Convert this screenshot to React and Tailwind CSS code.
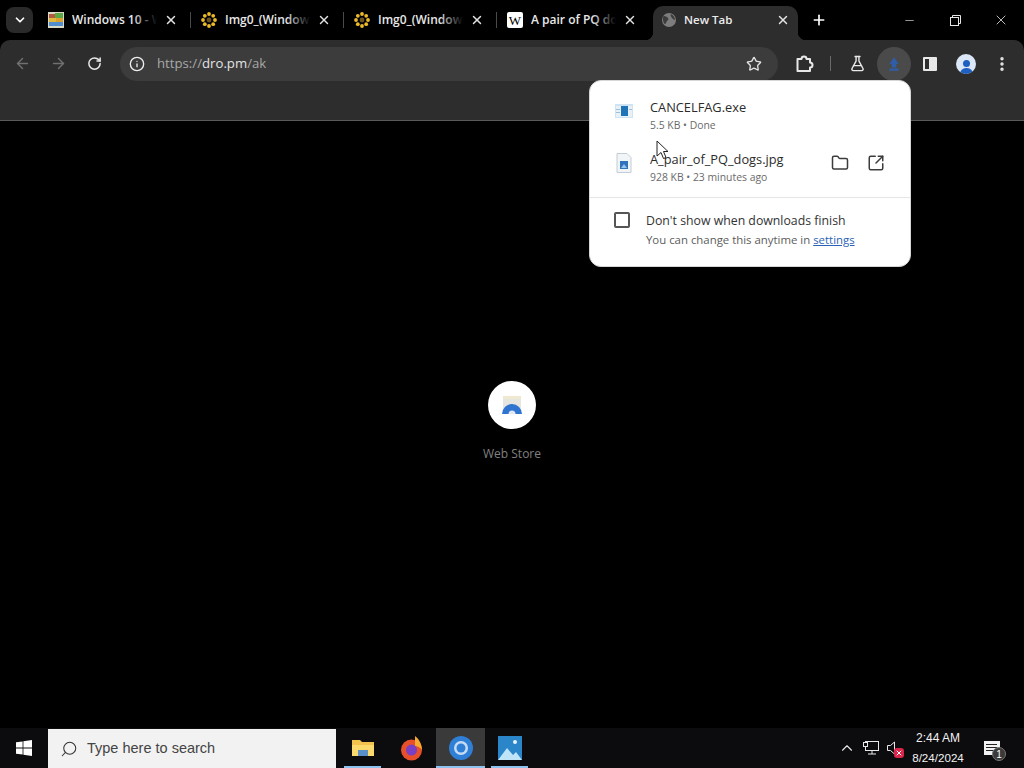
import React from 'react'
import { ChevronDown, X, Plus, Minus, ArrowLeft, ArrowRight, RotateCw, Info, Star, FlaskConical, EllipsisVertical, Folder, SquareArrowOutUpRight, ChevronUp, Search } from 'lucide-react'

const FONT = "font-['Open_Sans','Noto_Sans',sans-serif]"

const RainbowIcon = () => (
  <svg width="16" height="16" viewBox="0 0 16 16">
    <rect width="16" height="16" fill="#d9d9c8" />
    <rect x="1" y="2" width="6" height="4" fill="#b3583c" />
    <rect x="7" y="1" width="8" height="5" fill="#5aa845" />
    <rect x="1" y="6" width="7" height="4" fill="#e0b93c" />
    <rect x="8" y="6" width="7" height="4" fill="#d9a02f" />
    <rect x="1" y="10" width="14" height="4" fill="#4f8fd0" />
  </svg>
)

const FlowerIcon = () => (
  <svg width="16" height="16" viewBox="0 0 16 16">
    <circle cx="8" cy="8" r="2.4" fill="#6b5320" />
    {[[8, 2], [12.2, 3.8], [14, 8], [12.2, 12.2], [8, 14], [3.8, 12.2], [2, 8], [3.8, 3.8]].map(([x, y], i) => (
      <circle key={i} cx={x} cy={y} r="1.9" fill="#ecb92a" />
    ))}
  </svg>
)

const WikiIcon = () => (
  <div className="w-4 h-4 rounded-[2px] bg-white text-black flex items-center justify-center text-[13px] font-['Liberation_Serif',serif] leading-none">W</div>
)

const GlobeIcon = () => (
  <svg width="16" height="16" viewBox="0 0 16 16">
    <circle cx="8" cy="8" r="7" fill="#7d7d7d" />
    <path d="M3 4c2 0 3 1 4 2s0 2-1 3-1 3-2 3-2-3-2-5 0-3 1-3zM10 2c2 1 4 3 4 6-1 0-2-1-3-2s-2-3-1-4z" fill="#3c3c3c" />
  </svg>
)

const PuzzleIcon = () => (
  <svg className="ml-[17px]" width="19" height="19" viewBox="0 0 19 19" fill="none" stroke="#e8e8e8" strokeWidth="2" strokeLinejoin="round">
    <path d="M2.5 5h4a2.5 2.5 0 0 1 5 0h3.5v3.5a2.5 2.5 0 0 1 0 5V17H2.5z" />
  </svg>
)

const tabs = [
  { title: 'Windows 10 - W', icon: <RainbowIcon /> },
  { title: 'Img0_(Windows', icon: <FlowerIcon /> },
  { title: 'Img0_(Windows', icon: <FlowerIcon /> },
  { title: 'A pair of PQ dogs', icon: <WikiIcon /> },
]

const Tab = ({ title, icon, divider }) => (
  <div className="relative w-[153px] h-[34px] pb-[6px] pl-[10px] pr-[13px] flex items-center shrink-0">
    <div className="w-4 h-4 shrink-0">{icon}</div>
    <div className="relative ml-2 w-[85px] overflow-hidden whitespace-nowrap text-[12px] text-[#e8e8e8] font-semibold">
      {title}
      <div className="absolute inset-y-0 right-0 w-6 bg-gradient-to-r from-transparent to-black" />
    </div>
    <X className="ml-auto w-[14px] h-[14px] text-[#e3e3e3]" strokeWidth={2.5} />
    {divider && <div className="absolute right-0 top-[6px] w-px h-[16px] bg-[#4a4a4a]" />}
  </div>
)

const ActiveTab = () => (
  <div className="relative ml-[3px] w-[145px] h-[34px] pb-[6px] pl-[8px] pr-[8px] flex items-center rounded-t-[10px] bg-[#2d2d2d] shrink-0">
    <GlobeIcon />
    <span className="ml-[7px] text-[11.5px] font-semibold text-[#ececec]">New Tab</span>
    <X className="ml-auto w-[14px] h-[14px] text-[#e3e3e3]" strokeWidth={2.5} />
    <div className="absolute -left-[8px] bottom-0 w-[8px] h-[8px] bg-[radial-gradient(circle_at_0_0,transparent_8px,#2d2d2d_8.5px)]" />
    <div className="absolute -right-[8px] bottom-0 w-[8px] h-[8px] bg-[radial-gradient(circle_at_100%_0,transparent_8px,#2d2d2d_8.5px)]" />
  </div>
)

const FileRow = ({ name, meta, icon, actions }) => (
  <div className="flex items-center h-[52px] pl-[24px] pr-[25px]">
    <div className="w-[20px] flex justify-center mb-[8px]">{icon}</div>
    <div className="ml-[16px] flex-1">
      <div className="mb-[2px] text-[12.8px] leading-[18px] text-[#2b2b2b]">{name}</div>
      <div className="text-[10.4px] leading-[14px] text-[#6a6a6a]">{meta}</div>
    </div>
    {actions}
  </div>
)

const ExeIcon = () => (
  <svg width="18" height="14" viewBox="0 0 18 14">
    <rect width="18" height="14" fill="#cfe3f2" />
    <rect x="1" y="2" width="16" height="11" fill="#e8f1f8" />
    <rect x="6" y="2" width="7" height="10" fill="#1f74b8" />
    <rect x="1" y="5" width="4" height="1" fill="#9dbfd9" />
    <rect x="1" y="8" width="4" height="1" fill="#9dbfd9" />
    <rect x="14" y="5" width="3" height="1" fill="#9dbfd9" />
  </svg>
)

const JpgIcon = () => (
  <svg width="16" height="20" viewBox="0 0 16 20">
    <path d="M1 .5h10l4 4v15H1z" fill="#f2f5f8" stroke="#c4ccd4" />
    <rect x="4" y="8" width="8" height="8" fill="#2f73bd" />
    <path d="M5 15l3-4 3 4z" fill="#9cc3e8" />
  </svg>
)

const DownloadPopup = () => (
  <div className="absolute left-[589px] top-[80px] w-[322px] h-[187px] bg-white rounded-[12px] border border-[#d6d6d6] pt-[8px]">
    <FileRow name="CANCELFAG.exe" meta="5.5 KB • Done" icon={<ExeIcon />} />
    <FileRow
      name="A_pair_of_PQ_dogs.jpg"
      meta="928 KB • 23 minutes ago"
      icon={<JpgIcon />}
      actions={
        <div className="flex items-center gap-[18px] mb-[8px] text-[#3c3c3c]">
          <Folder className="w-[18px] h-[18px]" strokeWidth={2} />
          <SquareArrowOutUpRight className="w-[18px] h-[18px]" strokeWidth={2} />
        </div>
      }
    />
    <div className="mt-[4px] border-t border-[#e6e6e6] pt-[14px] pl-[24px] flex">
      <div className="w-[16px] h-[16px] border-2 border-[#555] rounded-[2px]" />
      <div className="ml-[16px]">
        <div className="text-[12.3px] leading-[18px] text-[#333]">Don't show when downloads finish</div>
        <div className="text-[11.4px] leading-[20px] text-[#5c5c5c]">
          You can change this anytime in <span className="text-[#2a62b5] underline">settings</span>
        </div>
      </div>
    </div>
  </div>
)

const MouseCursor = () => (
  <svg className="absolute left-[656px] top-[140px]" width="13" height="20" viewBox="0 0 13 20">
    <path d="M1 1v15l4-3.5 2.5 6 2.5-1-2.5-6H12z" fill="#fff" stroke="#222" strokeWidth="1" />
  </svg>
)

const WindowControls = () => (
  <div className="ml-auto flex items-center h-[28px] text-[#e8e8e8]">
    <div className="w-[46px] flex justify-center"><Minus className="w-[13px] h-[13px]" strokeWidth={1.2} /></div>
    <div className="w-[46px] flex justify-center">
      <svg width="11" height="11" viewBox="0 0 11 11" fill="none" stroke="currentColor">
        <rect x=".5" y="2.5" width="8" height="8" />
        <path d="M2.5 2.5v-2h8v8h-2" />
      </svg>
    </div>
    <div className="w-[46px] flex justify-center"><X className="w-[16px] h-[16px]" strokeWidth={1.2} /></div>
  </div>
)

const TabStrip = () => (
  <div className="h-[40px] bg-black flex items-start pt-[6px] relative">
    <div className="ml-[6px] mt-px w-[27px] h-[26px] rounded-[8px] bg-[#2a2a2a] flex items-center justify-center">
      <ChevronDown className="w-[14px] h-[14px] text-white" strokeWidth={3} />
    </div>
    <div className="ml-[5px] flex">
      {tabs.map((t, i) => (
        <Tab key={i} title={t.title} icon={t.icon} divider={i < 3} />
      ))}
      <ActiveTab />
      <div className="ml-[12px] mt-px w-[18px] h-[26px] flex items-center justify-center">
        <Plus className="w-[16px] h-[16px] text-white" strokeWidth={2.5} />
      </div>
    </div>
    <WindowControls />
  </div>
)

const Toolbar = () => (
  <div className="bg-[#2d2d2d] rounded-t-[10px] border-b border-[#5a5a5a] h-[81px]">
    <div className="h-[41px] flex items-center pt-[6px] pl-[14px]">
      <ArrowLeft className="w-[17px] h-[17px] text-[#707070]" strokeWidth={2} />
      <ArrowRight className="ml-[19px] w-[17px] h-[17px] text-[#707070]" strokeWidth={2} />
      <RotateCw className="ml-[20px] w-[15px] h-[15px] text-[#e8e8e8]" strokeWidth={2.4} />
      <div className="ml-[18px] w-[658px] h-[34px] rounded-[18px] bg-[#3c3c3c] flex items-center pl-[9px] pr-[16px]">
        <Info className="w-[16px] h-[16px] text-[#efefef]" strokeWidth={2} />
        <div className="ml-[12px] text-[13.2px] text-[#a8a8a8]">
          https://<span className="text-[#e4e4e4]">dro.pm</span>/ak
        </div>
        <Star className="ml-auto w-[16px] h-[16px] text-[#e3e3e3]" strokeWidth={2} />
      </div>
      <PuzzleIcon />
      <div className="ml-[16px] w-px h-[15px] bg-[#6a6a6a]" />
      <FlaskConical className="ml-[18px] w-[17px] h-[17px] text-[#e8e8e8]" strokeWidth={2} />
      <div className="ml-[11px] w-[34px] h-[34px] rounded-full bg-[#4a4a4a] flex items-center justify-center">
        <svg width="16" height="16" viewBox="0 0 14 14"><path d="M7 1l4 6H9v3H5V7H3zM3 11h8v2H3z" fill="#2f5ea8" /></svg>
      </div>
      <div className="ml-[12px] w-[14px] h-[14px] border-2 border-[#e8e8e8] flex justify-end rounded-[1px]">
        <div className="w-[6px] h-full bg-[#e8e8e8]" />
      </div>
      <div className="ml-[19px] w-[20px] h-[20px] rounded-full bg-[#dbe6f7] flex flex-col items-center justify-end overflow-hidden">
        <div className="w-[7px] h-[7px] rounded-full bg-[#1f5fbf]" />
        <div className="mt-[1px] w-[13px] h-[6px] rounded-t-full bg-[#1f5fbf]" />
      </div>
      <EllipsisVertical className="ml-[17px] w-[18px] h-[18px] text-[#e8e8e8]" strokeWidth={2.6} />
    </div>
  </div>
)

const WebStoreTile = () => (
  <div className="flex flex-col items-center pt-[260px]">
    <div className="w-[48px] h-[48px] rounded-full bg-white flex items-center justify-center">
      <svg width="24" height="24" viewBox="0 0 24 24">
        <rect x="3" y="3" width="18" height="18" fill="#e6e6e0" />
        <rect x="3" y="3" width="18" height="3" fill="#efe9d2" />
        <path d="M2 21a10 10 0 0 1 20 0z" fill="#2f74d0" />
        <path d="M8.5 21a3.5 3.5 0 0 1 7 0z" fill="#dfe9f7" />
      </svg>
    </div>
    <div className="mt-[16px] text-[12px] text-[#808080]">Web Store</div>
  </div>
)

const TaskbarApp = ({ children, active, running }) => (
  <div className={`relative w-[49px] h-full flex items-center justify-center ${active ? 'bg-[#3a3a3a]' : ''}`}>
    {children}
    {running && <div className={`absolute bottom-0 h-[2px] bg-[#8fc3ef] ${active ? 'left-0 right-0' : 'left-[6px] right-[6px]'}`} />}
  </div>
)

const Taskbar = () => (
  <div className="absolute bottom-0 left-0 right-0 h-[40px] bg-[#0c0c0e] flex items-stretch">
    <div className="w-[48px] flex items-center justify-center">
      <svg width="16" height="16" viewBox="0 0 16 16" fill="#fff">
        <path d="M0 2.3l6.6-.9v6.2H0zM7.4 1.3L16 0v7.6H7.4zM0 8.4h6.6v6.2L0 13.7zM7.4 8.4H16V16l-8.6-1.3z" />
      </svg>
    </div>
    <div className="w-[288px] mt-[1px] bg-[#f2f2f2] flex items-center pl-[12px]">
      <Search className="w-[18px] h-[18px] text-[#333] -scale-x-100" strokeWidth={1.4} />
      <span className="ml-[9px] text-[14.5px] text-[#444] font-['Liberation_Sans',sans-serif]">Type here to search</span>
    </div>
    <div className="ml-[2px] flex">
      <TaskbarApp running>
        <svg width="22" height="20" viewBox="0 0 22 20">
          <path d="M0 2h8l2 2h12v14H0z" fill="#f2c14e" />
          <rect y="7" width="22" height="11" fill="#fbd96c" />
          <rect x="6" y="12" width="10" height="6" fill="#5b8fc7" />
        </svg>
      </TaskbarApp>
      <TaskbarApp>
        <svg width="23" height="26" viewBox="0 0 23 26">
          <circle cx="11.5" cy="15" r="10.5" fill="#e8502a" />
          <path d="M15 1c4 3 7 8 7 14-2-3-5-4-7-4z" fill="#f8a92f" />
          <circle cx="11.5" cy="15" r="5.5" fill="#7a3fc2" />
        </svg>
      </TaskbarApp>
      <TaskbarApp active running>
        <svg width="24" height="24" viewBox="0 0 24 24">
          <circle cx="12" cy="12" r="12" fill="#2f7fd6" />
          <circle cx="12" cy="12" r="7" fill="#c5dcf4" />
          <circle cx="12" cy="12" r="4.5" fill="#2f7fd6" />
        </svg>
      </TaskbarApp>
      <TaskbarApp running>
        <svg width="24" height="24" viewBox="0 0 24 24">
          <rect width="24" height="24" fill="#2a85c9" />
          <path d="M0 24l9-12 6 7 3-3 6 8z" fill="#bfe3f7" />
          <circle cx="17" cy="6" r="2" fill="#e8f4fb" />
        </svg>
      </TaskbarApp>
    </div>
    <div className="ml-auto flex items-center text-white">
      <ChevronUp className="w-[18px] h-[18px] text-[#e8e8e8]" strokeWidth={1.5} />
      <svg className="ml-[7px]" width="16" height="14" viewBox="0 0 16 14" fill="none" stroke="#e8e8e8">
        <rect x="2.5" y=".5" width="13" height="9" />
        <rect x=".5" y="1.5" width="4" height="4" fill="#0c0c0e" />
        <path d="M9 10v3M5 13h8" />
      </svg>
      <div className="relative ml-[8px] w-[16px] h-[14px]">
        <svg width="10" height="14" viewBox="0 0 10 14" fill="none" stroke="#e8e8e8">
          <path d="M.5 4.5h3l4-3.5v12l-4-3.5h-3z" />
        </svg>
        <div className="absolute right-[-1px] bottom-[-3px] w-[10px] h-[10px] rounded-[3px] bg-[#d9254a] flex items-center justify-center">
          <X className="w-[8px] h-[8px] text-white" strokeWidth={3} />
        </div>
      </div>
      <div className="w-[70px] text-center text-[12px] leading-[20px] text-[#f2f2f2] font-['Liberation_Sans',sans-serif]">
        <div>2:44 AM</div>
        <div className="text-[11.6px]">8/24/2024</div>
      </div>
      <div className="relative ml-[11px] mr-[24px] w-[16px] h-[14px] bg-[#f2f2f2]">
        <div className="absolute left-[2px] top-[3px] w-[11px] h-px bg-[#222]" />
        <div className="absolute left-[2px] top-[6px] w-[11px] h-px bg-[#222]" />
        <div className="absolute left-[2px] top-[9px] w-[8px] h-px bg-[#222]" />
        <div className="absolute left-[8px] top-[6px] w-[14px] h-[14px] rounded-full bg-[#3a3a3a] border border-[#777] flex items-center justify-center text-[10px] text-white font-['Liberation_Sans',sans-serif]">1</div>
      </div>
    </div>
  </div>
)

export default function App() {
  return (
    <div className={`relative w-[1024px] h-[768px] overflow-hidden bg-black ${FONT}`}>
      <TabStrip />
      <Toolbar />
      <WebStoreTile />
      <DownloadPopup />
      <MouseCursor />
      <Taskbar />
    </div>
  )
}
